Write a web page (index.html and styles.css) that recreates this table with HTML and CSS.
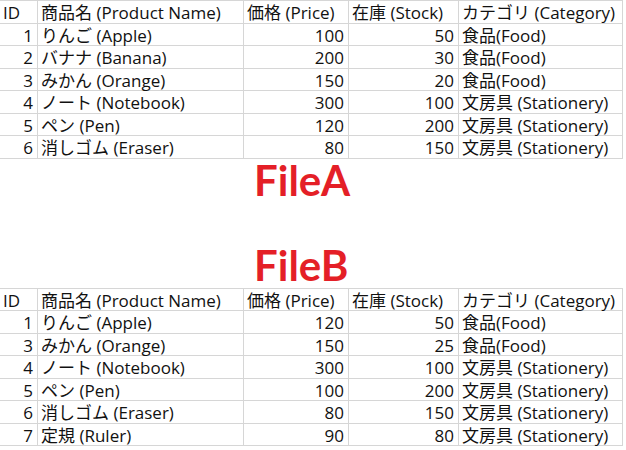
FILE: index.html
```html
<!DOCTYPE html>
<html lang="ja">
<head>
<meta charset="utf-8">
<link rel="stylesheet" href="styles.css">
</head>
<body>
<div class="sheet">
  <div class="grid">
    <div class="c">ID</div><div class="c">商品名 (Product Name)</div><div class="c">価格 (Price)</div><div class="c">在庫 (Stock)</div><div class="c">カテゴリ (Category)</div>
    <div class="c n">1</div><div class="c">りんご (Apple)</div><div class="c n">100</div><div class="c n">50</div><div class="c">食品(Food)</div>
    <div class="c n">2</div><div class="c">バナナ (Banana)</div><div class="c n">200</div><div class="c n">30</div><div class="c">食品(Food)</div>
    <div class="c n">3</div><div class="c">みかん (Orange)</div><div class="c n">150</div><div class="c n">20</div><div class="c">食品(Food)</div>
    <div class="c n">4</div><div class="c">ノート (Notebook)</div><div class="c n">300</div><div class="c n">100</div><div class="c">文房具 (Stationery)</div>
    <div class="c n">5</div><div class="c">ペン (Pen)</div><div class="c n">120</div><div class="c n">200</div><div class="c">文房具 (Stationery)</div>
    <div class="c n">6</div><div class="c">消しゴム (Eraser)</div><div class="c n">80</div><div class="c n">150</div><div class="c">文房具 (Stationery)</div>
  </div>
  <div class="label label-a">FileA</div>
  <div class="label label-b">FileB</div>
  <div class="grid">
    <div class="c">ID</div><div class="c">商品名 (Product Name)</div><div class="c">価格 (Price)</div><div class="c">在庫 (Stock)</div><div class="c">カテゴリ (Category)</div>
    <div class="c n">1</div><div class="c">りんご (Apple)</div><div class="c n">120</div><div class="c n">50</div><div class="c">食品(Food)</div>
    <div class="c n">3</div><div class="c">みかん (Orange)</div><div class="c n">150</div><div class="c n">25</div><div class="c">食品(Food)</div>
    <div class="c n">4</div><div class="c">ノート (Notebook)</div><div class="c n">300</div><div class="c n">100</div><div class="c">文房具 (Stationery)</div>
    <div class="c n">5</div><div class="c">ペン (Pen)</div><div class="c n">100</div><div class="c n">200</div><div class="c">文房具 (Stationery)</div>
    <div class="c n">6</div><div class="c">消しゴム (Eraser)</div><div class="c n">80</div><div class="c n">150</div><div class="c">文房具 (Stationery)</div>
    <div class="c n">7</div><div class="c">定規 (Ruler)</div><div class="c n">90</div><div class="c n">80</div><div class="c">文房具 (Stationery)</div>
  </div>
</div>
</body>
</html>
```
FILE: styles.css
```css
html, body {
  margin: 0;
  padding: 0;
  background: #ffffff;
}

.sheet {
  width: 626px;
  display: flex;
  flex-direction: column;
}

.grid {
  display: grid;
  grid-template-columns: 38px 206px 105px 110px 164px;
  grid-auto-rows: 22.5px;
  width: 623px;
  border-top: 1px solid #d6d6d6;
  font-family: "Open Sans", "Noto Sans CJK JP", sans-serif;
  font-size: 17px;
  color: #111111;
}

.c {
  box-sizing: border-box;
  border-right: 1px solid #d6d6d6;
  border-bottom: 1px solid #d6d6d6;
  padding: 1px 3px 0 3px;
  line-height: 21px;
  white-space: nowrap;
}

.c.n {
  text-align: right;
  padding-right: 4px;
}

.label {
  font-family: Lato, "Open Sans", sans-serif;
  font-weight: 700;
  font-size: 42px;
  line-height: 42px;
  color: #e41f27;
  padding-left: 254px;
}

.label-a {
  height: 42px;
}

.label-b {
  margin-top: 43px;
  height: 44px;
}
```
